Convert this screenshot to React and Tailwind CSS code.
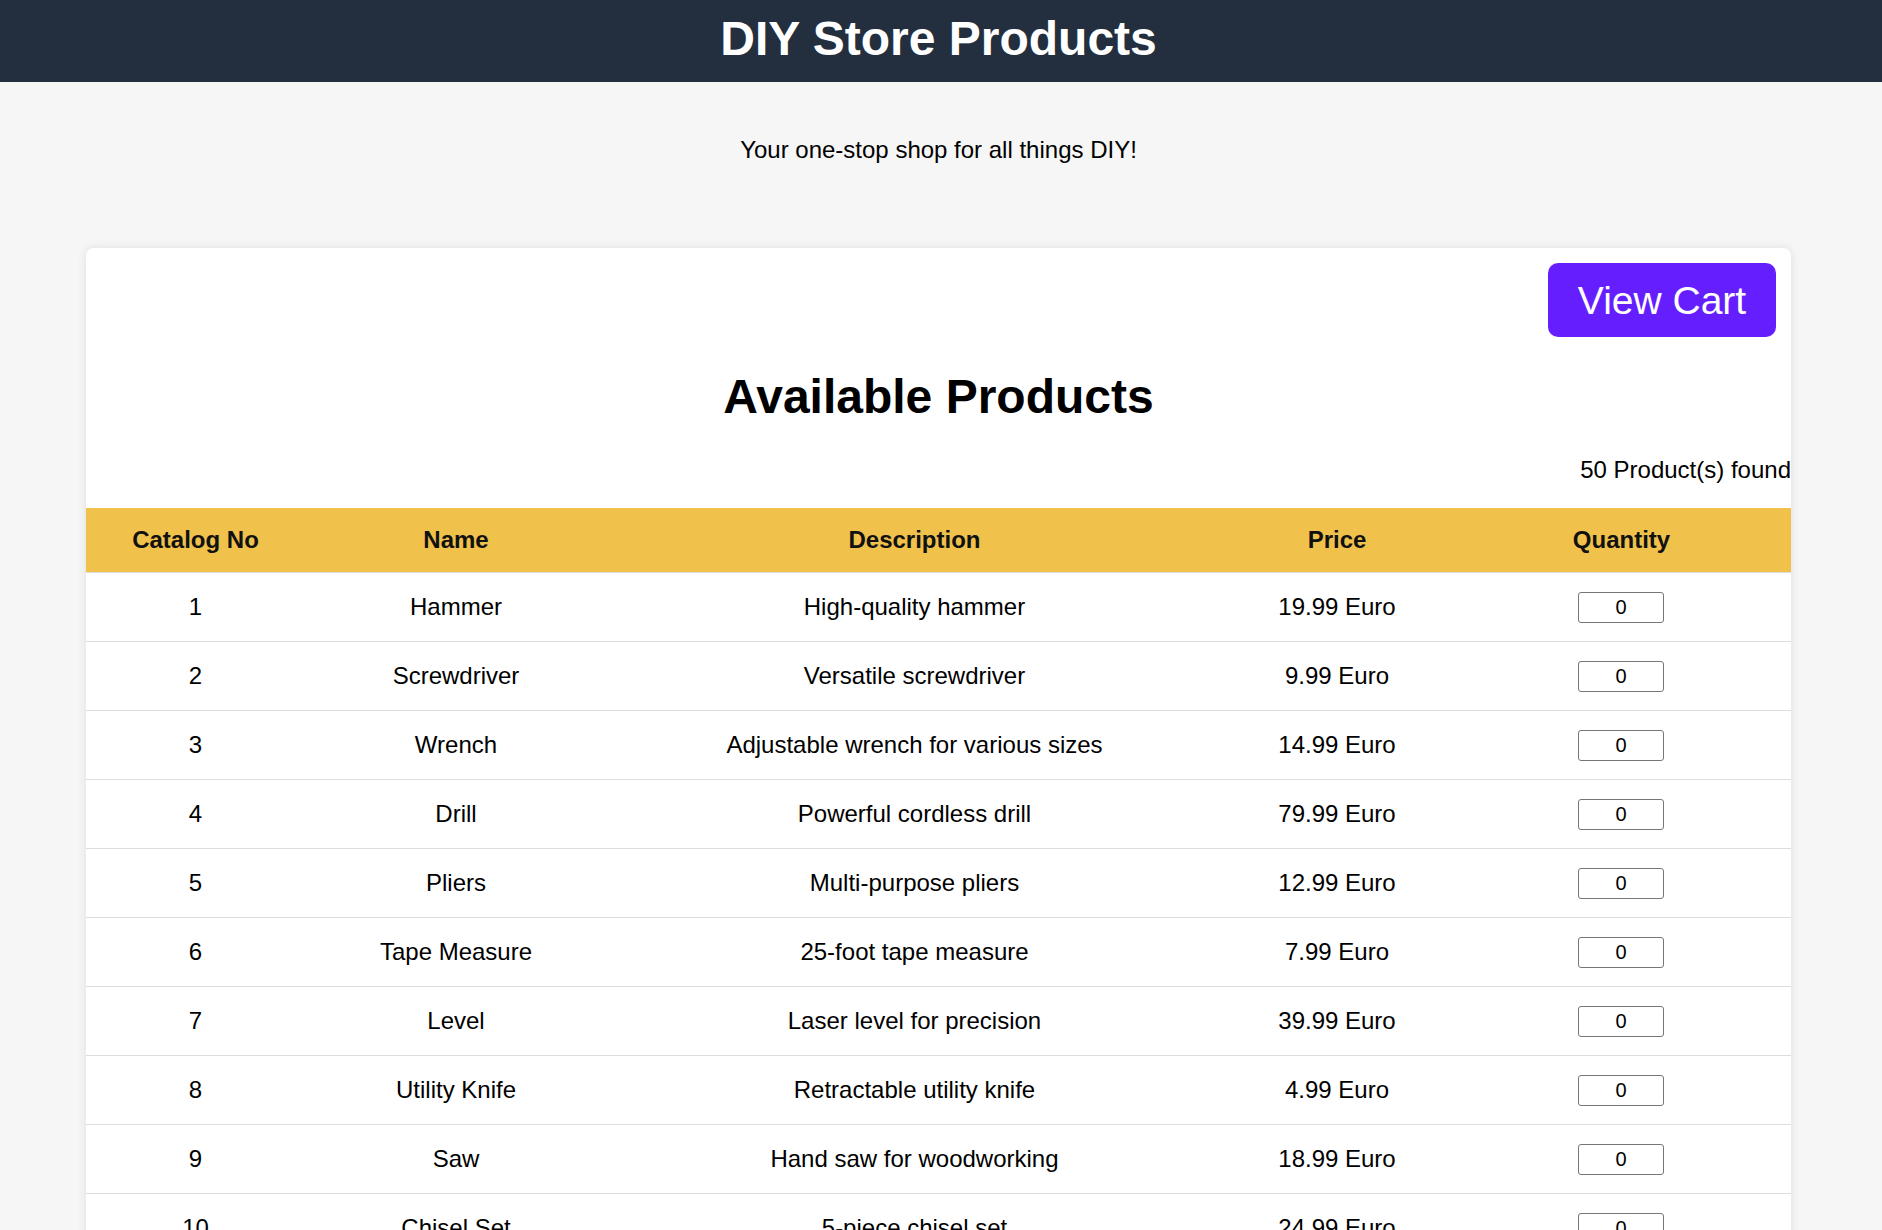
import React from "react";

const products = [
  [1, "Hammer", "High-quality hammer", "19.99"],
  [2, "Screwdriver", "Versatile screwdriver", "9.99"],
  [3, "Wrench", "Adjustable wrench for various sizes", "14.99"],
  [4, "Drill", "Powerful cordless drill", "79.99"],
  [5, "Pliers", "Multi-purpose pliers", "12.99"],
  [6, "Tape Measure", "25-foot tape measure", "7.99"],
  [7, "Level", "Laser level for precision", "39.99"],
  [8, "Utility Knife", "Retractable utility knife", "4.99"],
  [9, "Saw", "Hand saw for woodworking", "18.99"],
  [10, "Chisel Set", "5-piece chisel set", "24.99"],
  [11, "Sandpaper", "Assorted sandpaper pack", "6.99"],
  [12, "Clamp", "Heavy-duty bar clamp", "15.99"],
];

function Row({ p }) {
  return (
    <div className="grid grid-cols-[219px_302px_615px_230px_339px] h-[69px] items-center border-b border-[#dddddd] text-center text-[24px] leading-[28px] text-black">
      <div>{p[0]}</div>
      <div>{p[1]}</div>
      <div>{p[2]}</div>
      <div>{p[3]} Euro</div>
      <div className="flex justify-center pr-[1px]">
        <input
          type="text"
          defaultValue="0"
          className="w-[86px] h-[31px] border border-[#767676] rounded-[3px] text-center text-[20px] leading-[24px] text-black bg-white outline-none"
          style={{ fontFamily: '"Liberation Sans", Arial, sans-serif' }}
        />
      </div>
    </div>
  );
}

export default function App() {
  return (
    <div
      className="min-h-[1230px] bg-[#f6f6f6] text-black"
      style={{ fontFamily: '"Liberation Sans", Arial, Helvetica, sans-serif' }}
    >
      <header className="h-[82px] bg-[#232f3e] flex justify-center pt-[11px] pr-[5px]">
        <h1 className="text-white text-[48px] leading-[55px] font-bold">DIY Store Products</h1>
      </header>

      <main className="pl-[86px] pr-[91px]">
        <p className="mt-[54px] text-center text-[24px] leading-[28px]">
          Your one-stop shop for all things DIY!
        </p>

        <section className="mt-[84px] bg-white rounded-[8px] shadow-[0_0_10px_rgba(0,0,0,0.1)] pb-[20px]">
          <div className="flex justify-end pt-[15px] pr-[15px]">
            <button className="w-[228px] h-[74px] rounded-[10px] bg-[#651fff] text-white text-[39px] leading-[45px] flex items-center justify-center">
              View Cart
            </button>
          </div>

          <h2 className="mt-[32px] text-center text-[48px] leading-[55px] font-bold">
            Available Products
          </h2>

          <div className="mt-[32px] text-right text-[24px] leading-[28px]">50 Product(s) found</div>

          <div className="mt-[24px]">
            <div className="grid grid-cols-[219px_302px_615px_230px_339px] h-[65px] items-center bg-[#f0c14b] border-b border-[#dddddd] text-center text-[24px] leading-[28px] font-bold text-[#111111]">
              <div>Catalog No</div>
              <div>Name</div>
              <div>Description</div>
              <div>Price</div>
              <div>Quantity</div>
            </div>
            {products.map((p) => (
              <Row key={p[0]} p={p} />
            ))}
          </div>
        </section>
      </main>
    </div>
  );
}
